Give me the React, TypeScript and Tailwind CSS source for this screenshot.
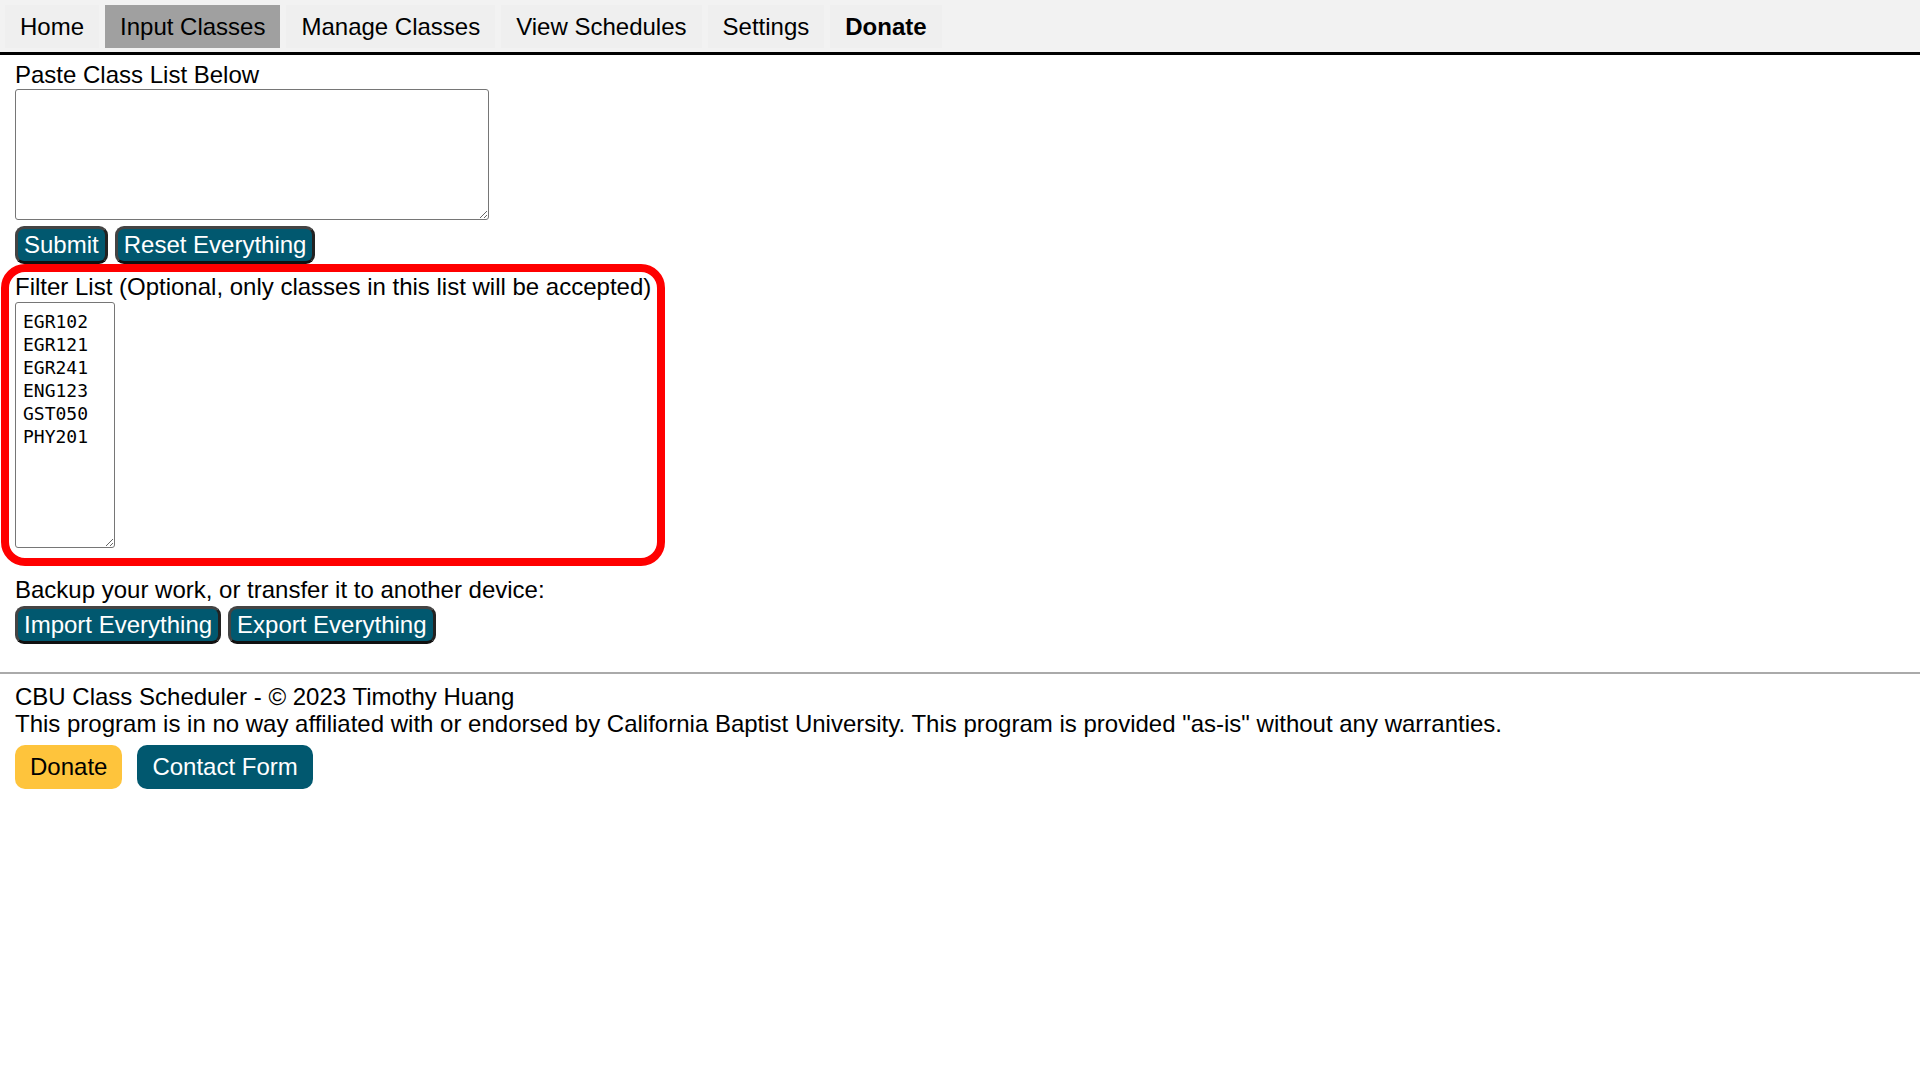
const navItems = ["Home", "Input Classes", "Manage Classes", "View Schedules", "Settings", "Donate"];

const filterList = "EGR102\nEGR121\nEGR241\nENG123\nGST050\nPHY201";

function TealButton({ label }: { label: string }) {
    return (
        <button className="h-[38px] rounded-[9px] border-[3px] border-[#444] border-b-[#111] border-r-[#222] bg-[#01586f] px-[6px] py-[2px] leading-[1.15] text-white">
            {label}
        </button>
    );
}

export default function App() {
    return (
        <div className="relative min-h-screen bg-white font-['Liberation_Sans',Arial,sans-serif] text-[24px] leading-[1.15] text-black">
            <nav className="box-border flex h-[55px] gap-[6px] border-b-[3px] border-black bg-[#f2f2f2] pl-[5px] pt-[5px]">
                {navItems.map((item) => (
                    <div
                        key={item}
                        className={
                            item === "Input Classes"
                                ? "h-[43px] bg-[#a0a0a0] px-[15px] py-2"
                                : item === "Donate"
                                  ? "h-[43px] bg-[#efefef] px-[15px] py-2 font-bold"
                                  : "h-[43px] bg-[#efefef] px-[15px] py-2"
                        }
                    >
                        {item}
                    </div>
                ))}
            </nav>

            <div className="px-[15px]">
                <p className="mt-[6px]">Paste Class List Below</p>
                <textarea className="block h-[131px] w-[474px] rounded-[3px] border border-[#767676] p-[7px] font-['DejaVu_Sans_Mono',monospace] text-[18px] leading-[23px]" />

                <div className="mt-[6px] flex gap-[7px]">
                    <TealButton label="Submit" />
                    <TealButton label="Reset Everything" />
                </div>

                <p className="mt-[9px]">Filter List (Optional, only classes in this list will be accepted)</p>
                <textarea
                    className="mt-[2px] block h-[246px] w-[100px] rounded-[3px] border border-[#767676] p-[7px] font-['DejaVu_Sans_Mono',monospace] text-[18px] leading-[23px] text-black"
                    defaultValue={filterList}
                />

                <p className="mt-[28px]">Backup your work, or transfer it to another device:</p>
                <div className="mt-[2px] flex gap-[7px]">
                    <TealButton label="Import Everything" />
                    <TealButton label="Export Everything" />
                </div>
            </div>

            <div className="mt-[28px] h-[2px] bg-[#aaaaaa]"></div>

            <footer className="px-[15px] pt-[9px]">
                <p>CBU Class Scheduler - © 2023 Timothy Huang</p>
                <p>This program is in no way affiliated with or endorsed by California Baptist University. This program is provided "as-is" without any warranties.</p>
                <div className="mt-[7px] flex gap-[15px]">
                    <button className="rounded-[10px] bg-[#fec43c] px-[15px] py-[8px] leading-[1.15] text-black">Donate</button>
                    <button className="rounded-[10px] bg-[#01586f] px-[15px] py-[8px] leading-[1.15] text-white">Contact Form</button>
                </div>
            </footer>

            {/* red highlight drawn over the filter section */}
            <div className="pointer-events-none absolute left-[1px] top-[264px] h-[302px] w-[664px] rounded-[24px] border-[8px] border-[#ff0000]"></div>
        </div>
    );
}
